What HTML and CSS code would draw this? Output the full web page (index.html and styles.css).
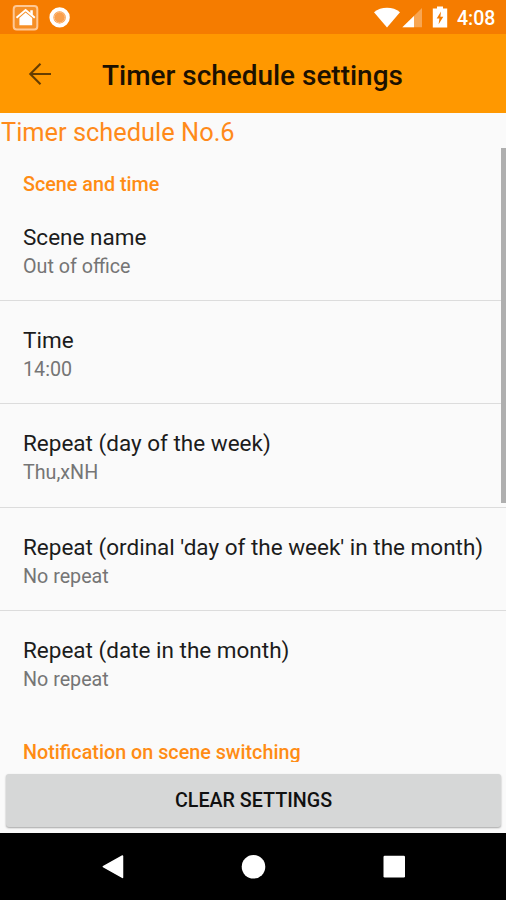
FILE: index.html
```html
<!DOCTYPE html>
<html lang="en">
<head>
<meta charset="utf-8">
<title>Timer schedule settings</title>
<link rel="stylesheet" href="styles.css">
</head>
<body>
<div class="screen">
  <div class="status">
    <svg class="status-left" width="80" height="34" viewBox="0 0 80 34">
      <rect x="13.7" y="6" width="23.6" height="23.4" rx="3" fill="#fff" fill-opacity=".15" stroke="#ffc894" stroke-width="2"/>
      <path d="M16.5 17.7 25.6 10l9.2 7.7" fill="none" stroke="#fff" stroke-width="2"/>
      <path d="M30.3 10.2h2.5v5l-2.5-2z" fill="#fff"/>
      <path d="M25.6 12.6 32.2 18v7.2H19.4V18z" fill="#fff"/>
      <circle cx="59.6" cy="17.4" r="8.2" fill="#f7943a" stroke="#fff" stroke-width="4"/>
      <circle cx="59.6" cy="17.4" r="5.4" fill="#f9a04e" stroke="#ffc48c" stroke-width="1"/>
    </svg>
    <svg class="status-right" width="80" height="34" viewBox="370 0 80 34">
      <path d="M374 12.2C381 6.3 393 6.3 400 12.2L387 27.5z" fill="#fff"/>
      <path d="M422 8v19.3h-19.6z" fill="#fff" fill-opacity=".32"/>
      <path d="M414 15.9v11.4h-11.6z" fill="#fff"/>
      <path d="M437 6.6h6v2h4.2v18.8h-14.4V8.6h4.2z" fill="#fff"/>
      <path d="M441 11.5 436.7 18.5h2.7l-.8 5.8 4.7-7.6h-2.9z" fill="#f57c00"/>
    </svg>
    <span class="clock">4:08</span>
  </div>
  <header class="appbar">
    <svg class="back" width="24" height="24" viewBox="0 0 24 24"><path d="M23 12H2M12.5 1.8 2.3 12l10.2 10.2" fill="none" stroke="#663d00" stroke-width="2.1"/></svg>
    <h1>Timer schedule settings</h1>
  </header>
  <div class="subtitle">Timer schedule No.6</div>
  <main class="list">
    <div class="section">Scene and time</div>
    <div class="row"><div class="name">Scene name</div><div class="value">Out of office</div></div>
    <div class="row"><div class="name">Time</div><div class="value">14:00</div></div>
    <div class="row"><div class="name">Repeat (day of the week)</div><div class="value">Thu,xNH</div></div>
    <div class="row"><div class="name">Repeat (ordinal 'day of the week' in the month)</div><div class="value">No repeat</div></div>
    <div class="row last"><div class="name">Repeat (date in the month)</div><div class="value">No repeat</div></div>
    <div class="section second">Notification on scene switching</div>
    <div class="scrollbar"></div>
  </main>
  <div class="footer"><button class="clear">CLEAR SETTINGS</button></div>
  <nav class="navbar">
    <svg width="506" height="67" viewBox="0 833 506 67" fill="#fff">
      <path d="M122.5 856v21.4L103.3 866.7z" stroke="#fff" stroke-width="1.5" stroke-linejoin="round"/>
      <circle cx="253.5" cy="866.8" r="11.8"/>
      <rect x="383.5" y="855.7" width="21.5" height="21.7" rx="1.2"/>
    </svg>
  </nav>
</div>
</body>
</html>
```
FILE: styles.css
```css
* { box-sizing: border-box; }
body { margin: 0; font-family: Roboto, "Liberation Sans", sans-serif; }
.screen { width: 506px; height: 900px; display: flex; flex-direction: column; background: #fafafa; overflow: hidden; }
.status { height: 34px; flex: none; display: flex; align-items: center; background: #f57c00; color: #fff; }
.status-right { margin-left: 290px; }
.clock { margin-left: 7px; font-size: 19.5px; font-weight: 500; line-height: 34px; padding-top: 3px; }
.appbar { height: 79px; flex: none; display: flex; align-items: center; background: #ff9800; padding-left: 28px; }
.back { flex: none; }
h1 { margin: 4px 0 0 50px; font-size: 27.95px; font-weight: 500; line-height: 32px; color: #1c1100; white-space: nowrap; }
.subtitle { height: 35px; flex: none; padding-left: 1px; font-size: 25.4px; line-height: 38px; color: #ff8a1a; white-space: nowrap; }
.list { position: relative; height: 614px; flex: none; overflow: hidden; }
.section { height: 49.6px; padding: 24px 23px 0; font-size: 19.75px; line-height: 26px; font-weight: 500; color: #ff8c14; white-space: nowrap; }
.row { height: 103.4px; padding: 25px 23px 0; border-bottom: 1px solid #dcdcdc; white-space: nowrap; }
.row.last { border-bottom: 0; }
.name { font-size: 22.5px; line-height: 29px; color: #1c1c1c; }
.value { font-size: 19.7px; line-height: 29.5px; color: #757575; }
.section.second { padding-top: 25px; }
.scrollbar { position: absolute; right: 0; top: 0; width: 5px; height: 355px; background: #afafaf; }
.footer { height: 71px; flex: none; padding: 12px 5px 0 6px; }
.clear { display: block; width: 100%; height: 53px; border: 0; border-radius: 3px; background: #d6d7d7; box-shadow: 0 1px 2px rgba(0,0,0,.35); font: 500 19.7px/53px Roboto, "Liberation Sans", sans-serif; color: #101010; padding: 0; }
.navbar { height: 67px; flex: none; background: #000; }
.navbar svg { display: block; }
```
